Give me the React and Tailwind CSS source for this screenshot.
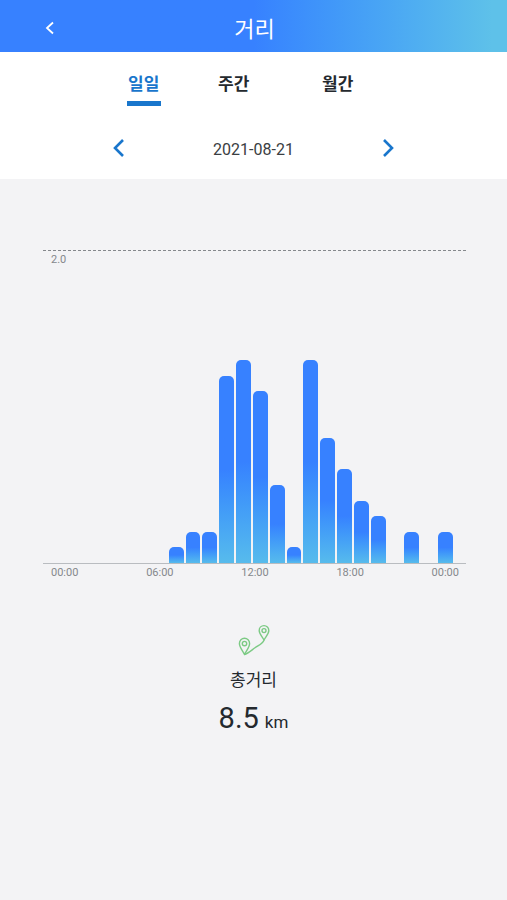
import React from "react";

const hourly = [
  0, 0, 0, 0, 0, 0, 0, 0.1, 0.2, 0.2, 1.2, 1.3,
  1.1, 0.5, 0.1, 1.3, 0.8, 0.6, 0.4, 0.3, 0, 0.2, 0, 0.2,
];
const MAX = 2;
const ticks = ["00:00", "06:00", "12:00", "18:00", "00:00"];

function Chevron({ className, points, stroke }) {
  return (
    <svg viewBox="0 0 12 20" className={className} fill="none" stroke="currentColor" strokeWidth={stroke} aria-hidden="true">
      <polyline points={points} />
    </svg>
  );
}

function RouteIcon() {
  return (
    <svg viewBox="0 0 32 32" className="h-8 w-8" fill="none" stroke="#7cca84" strokeWidth="1.4" strokeLinejoin="round" aria-hidden="true">
      <path d="M6.500 30.500C4.800 26.800 1.400 23.200 1.400 19.400a5.100 5.100 0 0 1 10.200 0C11.600 23.200 8.200 26.800 6.500 30.500Z" />
      <circle cx="6.500" cy="19.600" r="2.200" />
      <path d="M26 16.200C24.500 13 21.200 10 21.200 6.400a4.800 4.800 0 0 1 9.600 0C30.800 10 27.500 13 26 16.200Z" />
      <circle cx="26" cy="6.600" r="2" />
      <path d="M6.500 30.500C10 29.800 13.500 26.300 17 23.800S24.500 20 26 16.200" />
    </svg>
  );
}

export default function App() {
  return (
    <div className="flex min-h-screen flex-col bg-[#f3f3f5] font-[Roboto,'Noto_Sans_CJK_KR',sans-serif] text-[#24292e]">
      <header className="grid h-[52px] grid-cols-[100px_1fr_100px] items-center bg-linear-to-r from-[#3781ff] from-50% to-[#5ec1e9] to-97% text-white">
        <button type="button" aria-label="뒤로" className="flex h-full items-center justify-center pt-1">
          <Chevron className="h-5 w-3" points="9,4.500 3,10 9,15.500" stroke="1.800" />
        </button>
        <h1 className="pt-[7px] pl-[2px] text-center text-[22px] leading-8">거리</h1>
      </header>

      <section className="flex h-[127px] flex-col bg-white">
        <nav className="flex pt-[18px] pl-[25%] text-[17px] leading-7 font-bold">
          <button type="button" aria-current="page" className="w-[34px] border-b-5 border-[#1976cc] pb-[3px] whitespace-nowrap text-[#1976cc]">일일</button>
          <button type="button" className="ml-14 w-[34px] border-b-5 border-transparent pb-[3px] whitespace-nowrap">주간</button>
          <button type="button" className="ml-[70px] w-[34px] border-b-5 border-transparent pb-[3px] whitespace-nowrap">월간</button>
        </nav>
        <div className="mx-[22%] mt-[30px] flex h-7 items-center justify-between text-[#1976cc]">
          <button type="button" aria-label="이전 날짜" className="-mt-1">
            <Chevron className="h-5 w-3" points="11,2 3,10 11,18" stroke="2.600" />
          </button>
          <time dateTime="2021-08-21" className="text-[16px] leading-7 text-[#3a3e42]">2021-08-21</time>
          <button type="button" aria-label="다음 날짜" className="-mt-1">
            <Chevron className="h-5 w-3" points="1,2 9,10 1,18" stroke="2.600" />
          </button>
        </div>
      </section>

      <main className="flex flex-col pt-[71px]">
        <section aria-label="시간별 거리" className="pr-[41px] pl-[43px] text-[11px] leading-4 text-[#85888c]">
          <div className="flex h-[314px] flex-col border-b border-[#b9bcc0]">
            <svg className="h-px w-full" aria-hidden="true">
              <line x1="0" y1="0.500" x2="100%" y2="0.500" stroke="#85888c" strokeDasharray="3 2" />
            </svg>
            <span className="h-4 pt-[1px] pl-2">2.0</span>
            <div className="-mt-4 grid flex-1 grid-cols-24 items-end gap-x-[2px] pr-[13px] pl-2">
              {hourly.map((km, i) => (
                <div
                  key={i}
                  className="rounded-t-[5px] bg-linear-to-b from-[#3781ff] from-50% to-[#57bbec]"
                  style={{ height: `${(km / MAX) * 100}%` }}
                />
              ))}
            </div>
          </div>
          <div className="flex justify-between pt-[1px] pr-[7px] pl-2">
            {ticks.map((t, i) => (
              <span key={i}>{t}</span>
            ))}
          </div>
        </section>

        <section className="mt-[43px] flex flex-col items-center">
          <RouteIcon />
          <h2 className="mt-[10px] text-[17px] leading-7">총거리</h2>
          <p className="mt-[4px] flex items-baseline gap-[6px] leading-10">
            <span className="text-[29px]">8.5</span>
            <span className="text-[17px]">km</span>
          </p>
        </section>
      </main>
    </div>
  );
}
